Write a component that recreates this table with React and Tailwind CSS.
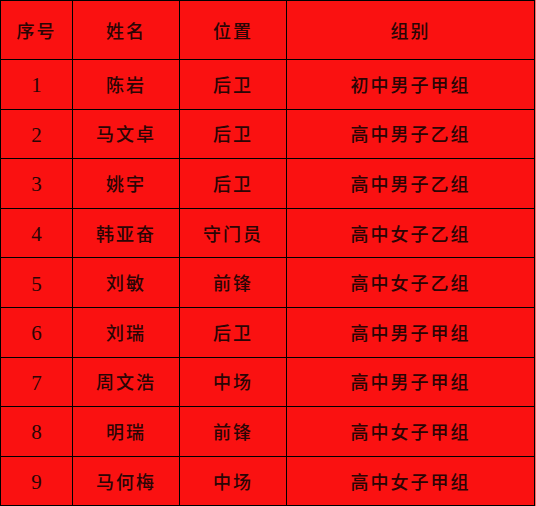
const rows = [
  ['1', '陈岩', '后卫', '初中男子甲组'],
  ['2', '马文卓', '后卫', '高中男子乙组'],
  ['3', '姚宇', '后卫', '高中男子乙组'],
  ['4', '韩亚奋', '守门员', '高中女子乙组'],
  ['5', '刘敏', '前锋', '高中女子乙组'],
  ['6', '刘瑞', '后卫', '高中男子甲组'],
  ['7', '周文浩', '中场', '高中男子甲组'],
  ['8', '明瑞', '前锋', '高中女子甲组'],
  ['9', '马何梅', '中场', '高中女子甲组'],
];

const cjk = { fontFamily: '"Noto Sans CJK SC", "Liberation Serif", serif' };
const num = { fontFamily: '"Liberation Serif", "Noto Sans CJK SC", serif' };

export default function App() {
  return (
    <div className="w-[536px] h-[506px] bg-[#f46a6a]">
      <table className="w-[535px] border-collapse bg-[#fa1111] text-[#2a0505] text-[18px] text-center">
        <colgroup>
          <col className="w-[72px]" />
          <col className="w-[107px]" />
          <col className="w-[107px]" />
          <col />
        </colgroup>
        <thead>
          <tr className="h-[59px]">
            {['序号', '姓名', '位置', '组别'].map((h) => (
              <th key={h} className="border border-black font-medium tracking-[2px] p-0" style={cjk}>
                {h}
              </th>
            ))}
          </tr>
        </thead>
        <tbody>
          {rows.map((r) => (
            <tr key={r[0]} className="h-[49.6px]">
              <td className="border border-black p-0 pt-[3px] text-[21px] leading-none" style={num}>{r[0]}</td>
              <td className="border border-black p-0 font-medium tracking-[2px]" style={cjk}>{r[1]}</td>
              <td className="border border-black p-0 font-medium tracking-[2px]" style={cjk}>{r[2]}</td>
              <td className="border border-black p-0 font-medium tracking-[2px]" style={cjk}>{r[3]}</td>
            </tr>
          ))}
        </tbody>
      </table>
    </div>
  );
}
